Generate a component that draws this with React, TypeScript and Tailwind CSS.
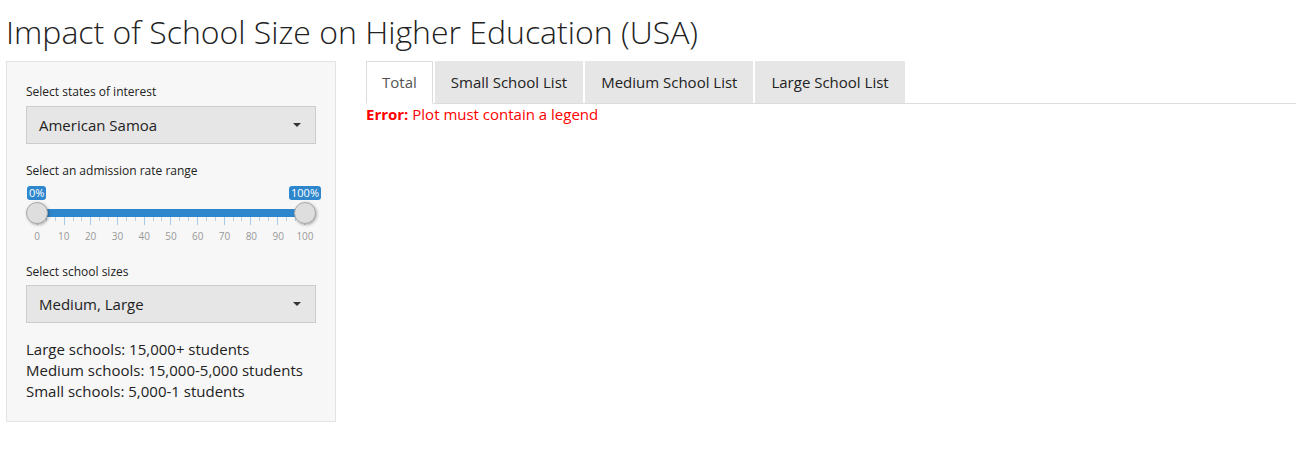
const ticks = Array.from({ length: 31 }, (_, i) => i);
const tickLabels = [0, 10, 20, 30, 40, 50, 60, 70, 80, 90, 100];

function SelectBox({ value }: { value: string }) {
  return (
    <div className="flex h-[38px] items-center justify-between border border-[#cccccc] bg-[#e6e6e6] pl-3 pr-[14px] text-[15px] text-[#222]">
      <span>{value}</span>
      <span className="h-0 w-0 border-x-[4px] border-t-[4px] border-x-transparent border-t-[#333]" />
    </div>
  );
}

function Handle({ side }: { side: "left" | "right" }) {
  return (
    <span
      className={
        "absolute top-[-7px] h-[22px] w-[22px] rounded-full border border-[#aaa] bg-[#dedede] shadow-[1px_1px_3px_rgba(0,0,0,0.3)] " +
        (side === "left" ? "left-[-11px]" : "right-[-11px]")
      }
    />
  );
}

function RangeSlider() {
  return (
    <div className="flex flex-col pb-[3px] pt-[5px]">
      {/* value badges */}
      <div className="-mr-[5px] flex justify-between pl-[1px]">
        <span className="rounded-[3px] bg-[#2e87cd] px-[2px] text-[11px] leading-[14px] text-white">0%</span>
        <span className="rounded-[3px] bg-[#2e87cd] px-[2px] text-[11px] leading-[14px] text-white">100%</span>
      </div>

      {/* track with handles */}
      <div className="relative mx-[11px] mt-[9px] h-[8px] bg-[#2e87cd]">
        <Handle side="left" />
        <Handle side="right" />
      </div>

      {/* grid ticks */}
      <div className="mx-[11px] flex h-[8px] items-start justify-between">
        {ticks.map((i) => (
          <span
            key={i}
            className={i % 3 === 0 ? "h-[8px] w-px bg-[#a6cbe8]" : "h-[4px] w-px bg-[#b8cfe0]"}
          />
        ))}
      </div>
      <div className="mx-[11px] mt-[4px] flex justify-between">
        {tickLabels.map((t) => (
          <span key={t} className="flex w-0 justify-center text-[10px] leading-[14px] text-[#999]">
            {t}
          </span>
        ))}
      </div>
    </div>
  );
}

export default function App() {
  const tabs = ["Total", "Small School List", "Medium School List", "Large School List"];

  return (
    <div className="min-h-[467px] bg-white px-[6px] font-['Open_Sans',sans-serif] text-[#222]">
      <h1 className="mb-[8px] mt-[11px] text-[32px] font-light leading-[42px] text-[#222]">
        Impact of School Size on Higher Education (USA)
      </h1>

      <div className="flex gap-[30px]">
        {/* Sidebar */}
        <div className="w-[330px] shrink-0 border border-[#e3e3e3] bg-[#f7f7f7] p-[19px]">
          <div className="mt-[1px] text-[12px] leading-[20px] text-[#222]">Select states of interest</div>
          <div className="mt-[4px]">
            <SelectBox value="American Samoa" />
          </div>

          <div className="mt-[17px] text-[12px] leading-[20px] text-[#222]">
            Select an admission rate range
          </div>
          <RangeSlider />

          <div className="mt-[16px] text-[12px] leading-[20px] text-[#222]">Select school sizes</div>
          <div className="mt-[3px]">
            <SelectBox value="Medium, Large" />
          </div>

          <div className="mt-[16px] text-[15px] leading-[21px] text-[#222]">
            <p>Large schools: 15,000+ students</p>
            <p>Medium schools: 15,000-5,000 students</p>
            <p>Small schools: 5,000-1 students</p>
          </div>
        </div>

        {/* Main panel */}
        <div className="mr-[3px] flex-1">
          <div className="flex gap-[2px] border-b border-[#dddddd]">
            {tabs.map((t, i) => (
              <div
                key={t}
                className={
                  i === 0
                    ? "-mb-px h-[43px] border border-b-white border-[#dddddd] bg-white px-[15px] text-[15px] leading-[41px] text-[#555]"
                    : "h-[42px] border border-[#e6e6e6] bg-[#e6e6e6] px-[15px] text-[15px] leading-[40px] text-[#222]"
                }
              >
                {t}
              </div>
            ))}
          </div>
          <p className="text-[15px] leading-[21px] text-[#ff0000]">
            <span className="font-bold">Error:</span> Plot must contain a legend
          </p>
        </div>
      </div>
    </div>
  );
}
